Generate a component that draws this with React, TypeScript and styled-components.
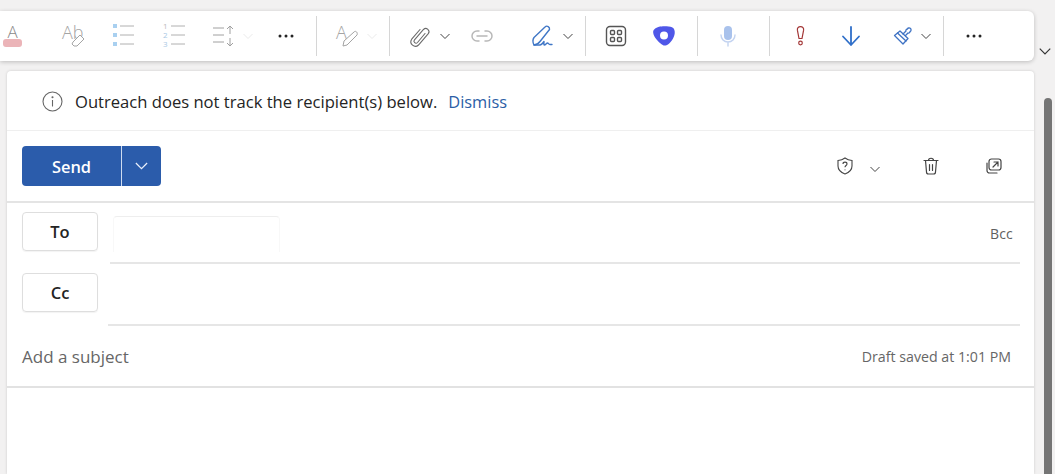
import React from "react";
import styled, { createGlobalStyle } from "styled-components";

const Global = createGlobalStyle`
  html, body { margin: 0; padding: 0; height: 100%; overflow: hidden; background: #f2f1f1; }
  #root { height: 100%; }
  * { box-sizing: border-box; }
`;
const Page = styled.div`
  width: 1055px; height: 474px; display: flex; flex-direction: column; padding-top: 11px;
  font-family: "Open Sans", "Noto Sans", "Liberation Sans", sans-serif; color: #242424; overflow: hidden;
`;
const TopRow = styled.div`display: flex; height: 50px; flex: none;`;
const Toolbar = styled.div`
  width: 1034px; height: 50px; background: #fff; display: flex; align-items: center;
  border-radius: 0 6px 6px 0; box-shadow: 0 1px 4px rgba(0,0,0,.22);
`;
const Slot = styled.div<{ $gap?: number; $w?: number; $faded?: number }>`
  flex: none; width: ${p => p.$w ?? 24}px; height: 24px; margin-left: ${p => p.$gap ?? 0}px;
  display: flex; align-items: center; justify-content: center; opacity: ${p => p.$faded ?? 1};
  svg { display: block; overflow: visible; }
`;
const LowSlot = styled(Slot)`margin-top: 6px;`;
const Sep = styled.div<{ $gap: number }>`
  flex: none; width: 1px; height: 40px; margin-left: ${p => p.$gap}px; background: #d6d6d6;
`;
const Collapse = styled.div`
  flex: 1; display: flex; justify-content: center; padding: 33px 0 0 0;
  svg { display: block; }
`;
const BodyRow = styled.div`display: flex; flex: 1; padding-top: 10px; min-height: 0;`;
const Card = styled.main`
  width: 1027px; margin-left: 7px; background: #fff; border-radius: 4px 4px 0 0;
  box-shadow: 0 0 3px rgba(0,0,0,.16); display: flex; flex-direction: column;
`;
const Gutter = styled.div`flex: 1; display: flex; justify-content: flex-end; padding: 27px 3px 0 0;`;
const Thumb = styled.div`width: 8px; height: 400px; background: #757575; border-radius: 4px;`;
const Notice = styled.div`
  height: 60px; display: flex; align-items: center; padding: 1px 0 0 35px; border-bottom: 1px solid #efefef;
  font-size: 16.6px; svg { flex: none; margin-right: 12px; }
`;
const Dismiss = styled.a`color: #2b5ea6; margin-left: 11px; font-size: 16.4px;`;
const ActionRow = styled.div`
  height: 72px; display: flex; align-items: center; padding: 0 0 1px 15px; border-bottom: 2px solid #e4e4e4;
`;
const SendGroup = styled.div`display: flex; height: 40px; border-radius: 4px; overflow: hidden; background: #2b5cab;`;
const SendBtn = styled.div`
  width: 99px; display: flex; align-items: center; justify-content: center; color: #fff; padding: 2px 0 0 1px;
  font-size: 16.4px; font-weight: 600; border-right: 1px solid #2b5cab;
`;
const SendCaret = styled.div`
  width: 40px; border-left: 1px solid #cfdcf0; display: flex; align-items: center; justify-content: center;
`;
const RecipientRow = styled.div<{ $h: number }>`
  height: ${p => p.$h}px; display: flex; align-items: flex-start; padding-left: 15px;
`;
const RoleCell = styled.div`padding-top: 9px; flex: none;`;
const RoleBtn = styled.div`
  width: 76px; height: 39px; border: 1px solid #dedede; border-radius: 4px; display: flex;
  align-items: center; justify-content: center; font-size: 16.5px; font-weight: 600; color: #242424;
  box-shadow: 0 1px 1px rgba(0,0,0,.05);
`;
const InputArea = styled.div<{ $ml: number }>`
  flex: none; width: ${p => 1013 - 91 - p.$ml}px; margin-left: ${p => p.$ml}px; height: 100%;
  border-bottom: 2px solid #e6e6e6; display: flex; justify-content: space-between; align-items: flex-start;
`;
const ChipBox = styled.div`
  width: 167px; height: 36px; margin: 13px 0 0 3px; border-top: 1px solid #eeeeee; border-left: 1px solid #f8f8f8;
  border-right: 1px solid #f8f8f8; border-radius: 4px 4px 0 0;
`;
const Bcc = styled.span`font-size: 14px; color: #5f5f5f; margin: 21px 7px 0 0; letter-spacing: .2px;`;
const SubjectRow = styled.div`
  height: 62px; display: flex; align-items: center; justify-content: space-between;
  padding: 1px 23px 0 15px; border-bottom: 2px solid #e2e2e2; 
`;
const Subject = styled.span`font-size: 17px; color: #666;`;
const Saved = styled.span`font-size: 14.2px; color: #666;`;
const Right = styled.div`margin-left: auto; display: flex; align-items: center; padding-right: 31px;`;

const Chev = ({ c = "#444", w = 12 }: { c?: string; w?: number }) => (
  <svg width={w} height={w} viewBox="0 0 12 12" fill="none" stroke={c} strokeWidth="1"><path d="M1.500 4l4.500 4.500L10.500 4" /></svg>
);
const Dots = () => (
  <svg width="16" height="4" viewBox="0 0 16 4" fill="#242424"><circle cx="2" cy="2" r="1.500" /><circle cx="8" cy="2" r="1.500" /><circle cx="14" cy="2" r="1.500" /></svg>
);
const fontA = { fontFamily: "'Open Sans', sans-serif", fontWeight: 300 };

export default function App() {
  return (
    <Page>
      <Global />
      <TopRow>
        <Toolbar>
          <Slot>
            <svg width="24" height="24" viewBox="0 0 24 24">
              <text x="12.500" y="14" textAnchor="middle" fontSize="17" fill="#8a8a8a" style={fontA}>A</text>
              <rect x="3" y="15" width="19" height="8" rx="3" fill="#ebb4b8" />
            </svg>
          </Slot>
          <Slot $gap={37}>
            <svg width="24" height="24" viewBox="0 0 24 24" fill="none">
              <text x="1" y="15" fontSize="18" fill="#a4a4a4" style={fontA}>Ab</text>
              <path d="M12 18l7-7 4 4-7 7h-3l-2-2z" stroke="#a4a4a4" fill="#fff" />
            </svg>
          </Slot>
          <Slot $gap={27}>
            <svg width="24" height="24" viewBox="0 0 24 24" fill="none">
              <g fill="#a9d0f0"><rect x="1" y="0" width="4" height="4" /><rect x="1" y="9" width="4" height="4" /><rect x="1" y="18" width="4" height="4" /></g>
              <path d="M8 2h14M8 11h14M8 20h14" stroke="#b0b0b0" />
            </svg>
          </Slot>
          <Slot $gap={26}>
            <svg width="24" height="24" viewBox="0 0 24 24" fill="none">
              <g fontSize="8" fill="#a9c8e4" style={{ fontFamily: "'Open Sans', sans-serif" }}><text x="1" y="5" fill="#bbb">1</text><text x="1" y="14">2</text><text x="1" y="23">3</text></g>
              <path d="M9 2h14M9 11h14M9 20h14" stroke="#b0b0b0" />
            </svg>
          </Slot>
          <Slot $gap={26}>
            <svg width="24" height="24" viewBox="0 0 24 24" fill="none" stroke="#a0a0a0">
              <path d="M1 4h11M1 11h11M1 18h11" />
              <path d="M18 10V2m-3 3l3-3 3 3M18 14v8m-3-3l3 3 3-3" />
            </svg>
          </Slot>
          <Slot $gap={6} $w={12} $faded={0.1}><Chev /></Slot>
          <Slot $gap={20}><Dots /></Slot>
          <Sep $gap={18} />
          <Slot $gap={18}>
            <svg width="24" height="24" viewBox="0 0 24 24" fill="none">
              <text x="1" y="15" fontSize="18" fill="#a4a4a4" style={fontA}>A</text>
              <path d="M8 22l1-5 10-9c2-2 4 1 3 3L12 21z" stroke="#a4a4a4" fill="#fff" />
            </svg>
          </Slot>
          <Slot $gap={7} $w={12} $faded={0.1}><Chev /></Slot>
          <Sep $gap={11} />
          <Slot $gap={18}>
            <svg width="24" height="24" viewBox="0 0 24 24" fill="none" stroke="#6a6a6a" strokeWidth="1.100" strokeLinecap="round">
              <path d="M17 9.500L9.500 18.500a2 2 0 0 1-3-2.700L15.500 5.500a3.200 3.200 0 0 1 4.800 4.200L10.500 21a4.500 4.500 0 0 1-6.800-5.800L12 5.500" />
            </svg>
          </Slot>
          <Slot $gap={7} $w={12}><Chev /></Slot>
          <Slot $gap={19}>
            <svg width="22" height="12" viewBox="0 0 22 12" fill="none" stroke="#b8b8b8" strokeWidth="1.500" strokeLinecap="round">
              <path d="M8 1H6a5 5 0 0 0 0 10h2M14 1h2a5 5 0 0 1 0 10h-2M6 6h10" />
            </svg>
          </Slot>
          <Slot $gap={37}>
            <svg width="22" height="22" viewBox="0 0 22 22" fill="none" stroke="#4077c6" strokeWidth="1.400" strokeLinejoin="round" strokeLinecap="round">
              <path d="M2 20c-1.500-3-1-6 0-7.500L13 2c2-2 5 0 4.500 2.500L8 16.500C6 19 4 20 2 20z" />
              <path d="M2 20h6c1.500 0 3-2 4-3.500 0 1.500-.5 3.500.5 3.500s2-2 3-2 1 1.500 2.500 1.500h2" />
            </svg>
          </Slot>
          <Slot $gap={7} $w={12}><Chev /></Slot>
          <Sep $gap={11} />
          <Slot $gap={18}>
            <svg width="22" height="22" viewBox="0 0 22 22" fill="none" stroke="#555" strokeWidth="1.400">
              <rect x="1.500" y="1.500" width="19" height="19" rx="3.500" />
              <rect x="5.500" y="5.500" width="4" height="4" rx="1" /><rect x="12.500" y="5.500" width="4" height="4" rx="1" />
              <rect x="5.500" y="12.500" width="4" height="4" rx="1" /><rect x="12.500" y="12.500" width="4" height="4" rx="1" />
            </svg>
          </Slot>
          <Slot $gap={24}>
            <svg width="22" height="20" viewBox="0 0 22 20">
              <path fillRule="evenodd" fill="#4f57e8" d="M6 .8C9-.2 16 0 19 1.200c2.500 1 3 4 2.700 6.300-.4 4-4 10-8.200 11.800-2.500 1-4.500-.5-6.500-2.300C4 14.500.6 10.500.2 6.800-.1 3.500 2.500 1.800 6 .8zM11 5.500a4 4 0 1 0 0 8 4 4 0 0 0 0-8z" />
            </svg>
          </Slot>
          <Sep $gap={21} />
          <Slot $gap={18}>
            <svg width="16" height="22" viewBox="0 0 16 22" fill="none">
              <rect x="4" y="1" width="8" height="14" rx="4" fill="#a9c2ec" />
              <path d="M1 10c0 4 3 7 7 7s7-3 7-7M8 17v4" stroke="#c3d3f0" strokeWidth="1.400" strokeLinecap="round" />
            </svg>
          </Slot>
          <Sep $gap={29} />
          <Slot $gap={18}>
            <svg width="9" height="20" viewBox="0 0 9 20" fill="none" stroke="#a33636" strokeWidth="1.200">
              <path d="M4.500 .7c2.200 0 3.400 1.500 3.100 3.500L6 12.500H3L1.400 4.200C1.100 2.200 2.300.7 4.500.7z" /><circle cx="4.500" cy="17" r="1.800" />
            </svg>
          </Slot>
          <Slot $gap={27}>
            <svg width="20" height="22" viewBox="0 0 20 22" fill="none" stroke="#2f6fc9" strokeWidth="1.800" strokeLinecap="round" strokeLinejoin="round">
              <path d="M10 2v18M2 11.500l8 8.500 8-8.500" />
            </svg>
          </Slot>
          <Slot $gap={27}>
            <svg width="19" height="18" viewBox="0 0 19 18" fill="none" stroke="#3f73c4" strokeWidth="1.300" strokeLinejoin="round" strokeLinecap="round">
              <path d="M7 4L15 11.500 10 17 1.500 8.500z" />
              <path d="M4.500 6L13 14" />
              <path d="M10 7l3-3c-.5-1 .5-2 1.500-2 0-1 2-1.500 3-.5s.5 3-.5 3c0 1-1 2-2 1.500l-2.500 2.500" />
            </svg>
          </Slot>
          <Slot $gap={6} $w={12}><Chev /></Slot>
          <Sep $gap={11} />
          <Slot $gap={18}><Dots /></Slot>
        </Toolbar>
        <Collapse><Chev c="#333" w={14} /></Collapse>
      </TopRow>
      <BodyRow>
        <Card>
          <Notice>
            <svg width="21" height="21" viewBox="0 0 21 21" fill="none" stroke="#666" strokeWidth="1.100">
              <circle cx="10.500" cy="10.500" r="9.500" /><path d="M10.500 9v6.500" /><circle cx="10.500" cy="6.300" r=".5" fill="#666" />
            </svg>
            Outreach does not track the recipient(s) below.
            <Dismiss>Dismiss</Dismiss>
          </Notice>
          <ActionRow>
            <SendGroup>
              <SendBtn>Send</SendBtn>
              <SendCaret><Chev c="#e8eefa" w={15} /></SendCaret>
            </SendGroup>
            <Right>
              <Slot $w={18}>
                <svg width="16" height="18" viewBox="0 0 16 18" fill="none" stroke="#444" strokeWidth="1.100">
                  <path d="M8 1c2 1.500 4 2.300 7 2.500v5.500c0 4-3 6.500-7 8-4-1.500-7-4-7-8V3.500C4 3.300 6 2.500 8 1z" />
                  <path d="M6 7c0-2.500 4-2.500 4 0 0 1.500-2 1.500-2 3.200M8 12.500v.8" />
                </svg>
              </Slot>
              <LowSlot $gap={15} $w={12}><Chev /></LowSlot>
              <Slot $gap={41} $w={18}>
                <svg width="16" height="18" viewBox="0 0 16 18" fill="none" stroke="#444" strokeWidth="1.200" strokeLinecap="round">
                  <path d="M1 3.500h14M5.500 3.500c0-3 5-3 5 0M2.500 3.500l1 11.500a2 2 0 0 0 2 2h5a2 2 0 0 0 2-2l1-11.500M6.500 7.500v6M9.500 7.500v6" />
                </svg>
              </Slot>
              <Slot $gap={45} $w={18}>
                <svg width="16" height="16" viewBox="0 0 16 16" fill="none" stroke="#444" strokeWidth="1.200">
                  <rect x="3" y="1" width="12" height="11" rx="2.500" />
                  <path d="M1 5v7.500A2.500 2.500 0 0 0 3.500 15H11M7 9l5-5M8 4h4v4" strokeLinecap="round" />
                </svg>
              </Slot>
            </Right>
          </ActionRow>
          <RecipientRow $h={61}>
            <RoleCell><RoleBtn>To</RoleBtn></RoleCell>
            <InputArea $ml={12}>
              <ChipBox />
              <Bcc>Bcc</Bcc>
            </InputArea>
          </RecipientRow>
          <RecipientRow $h={62}>
            <RoleCell><RoleBtn>Cc</RoleBtn></RoleCell>
            <InputArea $ml={10} />
          </RecipientRow>
          <SubjectRow>
            <Subject>Add a subject</Subject>
            <Saved>Draft saved at 1:01 PM</Saved>
          </SubjectRow>
        </Card>
        <Gutter><Thumb /></Gutter>
      </BodyRow>
    </Page>
  );
}
